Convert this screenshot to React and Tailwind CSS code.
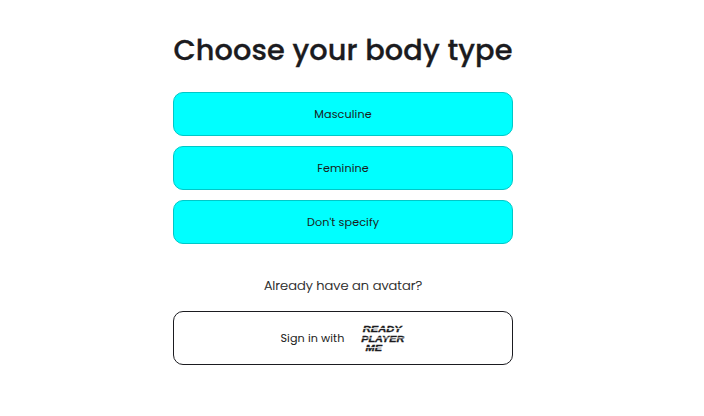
const options = ['Masculine', 'Feminine', "Don't specify"];

function Logo() {
  return (
    <svg width="46" height="30" viewBox="0 0 46 30" aria-label="Ready Player Me">
      <g
        fill="#1b1b20"
        stroke="#1b1b20"
        strokeWidth="0.35"
        fontFamily="'Liberation Sans', Arial, sans-serif"
        fontSize="9.9"
        fontStyle="italic"
        fontWeight="700"
      >
        <text x="2.8" y="9" textLength="39" lengthAdjust="spacingAndGlyphs">READY</text>
        <text x="1.2" y="18.5" textLength="43" lengthAdjust="spacingAndGlyphs">PLAYER</text>
        <text x="5.5" y="28" textLength="16.5" lengthAdjust="spacingAndGlyphs">ME</text>
      </g>
      <g fill="#fff" fillOpacity="0.8">
        <path d="M3 5h41v1H3zM1 14.5h44v1H1zM4 24h20v1H4z" />
      </g>
    </svg>
  );
}

export default function App() {
  return (
    <main className="flex h-[416px] w-[704px] flex-col items-center bg-white pr-[18px] pt-7 font-['Poppins','Inter',sans-serif] text-[#1b1b20]">
      <h1 className="h-11 whitespace-nowrap text-[28.8px] font-medium leading-[44px] tracking-[0.09px] [-webkit-text-stroke:0.3px_#1b1b20]">
        Choose your body type
      </h1>
      <div className="mt-5 flex w-[340px] flex-col gap-2.5">
        {options.map((label) => (
          <button
            key={label}
            className="h-11 rounded-[10px] border border-[#00c8c8] bg-[#00ffff] text-[11.2px] leading-4 tracking-[0.1px]"
          >
            {label}
          </button>
        ))}
      </div>
      <p className="mt-8 h-5 whitespace-nowrap text-[13px] font-light leading-5 [-webkit-text-stroke:0.15px_#1b1b20]">
        Already have an avatar?
      </p>
      <button className="mt-[15px] flex h-[54px] w-[340px] items-center justify-center gap-[15px] rounded-[10px] border border-[#1b1b20] bg-white text-[11.2px]">
        <span className="whitespace-nowrap tracking-[0.08px]">Sign in with</span>
        <Logo />
      </button>
    </main>
  );
}
